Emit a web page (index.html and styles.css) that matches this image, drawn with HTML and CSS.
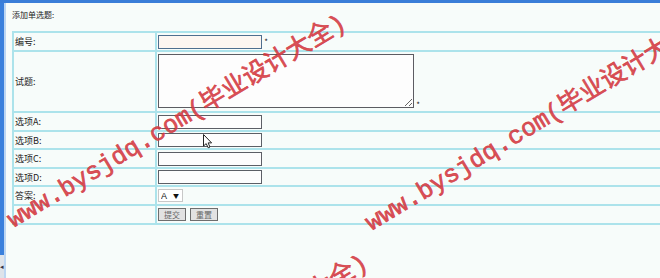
FILE: index.html
```html
<!DOCTYPE html>
<html lang="zh-CN">
<head>
<meta charset="utf-8">
<title>添加单选题</title>
<link rel="stylesheet" href="styles.css">
</head>
<body>
<div class="topbar"></div>
<div class="frame">
  <div class="leftbar">
    <div class="leftbar-blue"></div>
    <div class="leftbar-scroll"><span class="scroll-arrow">◂</span></div>
  </div>
  <div class="main">
    <div class="title">添加单选题:</div>
    <div class="form">
      <div class="cell label">编号:</div>
      <div class="cell value"><span class="field"><input class="txt focus" type="text"> <span class="star">*</span></span></div>

      <div class="cell label">试题:</div>
      <div class="cell value"><span class="field"><textarea class="area"></textarea> <span class="star">*</span></span></div>

      <div class="cell label">选项A:</div>
      <div class="cell value"><input class="txt" type="text"></div>

      <div class="cell label">选项B:</div>
      <div class="cell value"><input class="txt" type="text"></div>

      <div class="cell label">选项C:</div>
      <div class="cell value"><input class="txt" type="text"></div>

      <div class="cell label">选项D:</div>
      <div class="cell value"><input class="txt" type="text"></div>

      <div class="cell label">答案:</div>
      <div class="cell value">
        <span class="selectbox"><select class="sel"><option>A</option><option>B</option><option>C</option><option>D</option></select><span class="sel-arrow">▼</span></span>
      </div>

      <div class="cell label"></div>
      <div class="cell value buttons">
        <button class="btn" type="button">提交</button>
        <button class="btn" type="button">重置</button>
      </div>
    </div>
  </div>
</div>

<div class="watermarks">
  <span class="mark mark1">www.bysjdq.com(毕业设计大全)</span>
  <span class="mark mark2">www.bysjdq.com(毕业设计大全)</span>
  <span class="mark mark3">www.bysjdq.com(毕业设计大全)</span>
</div>

<svg class="cursor" width="10" height="15" viewBox="0 0 10 15">
  <path d="M0.5,0.5 L0.5,12 L3.2,9.6 L5.2,13.8 L7,13 L5.1,8.9 L8.6,8.9 Z" fill="#fff" stroke="#222" stroke-width="1" stroke-linejoin="round"/>
</svg>
</body>
</html>
```

FILE: styles.css
```css
html, body {
  margin: 0;
  padding: 0;
}
body {
  width: 660px;
  height: 278px;
  overflow: hidden;
  background: #f7fcfa;
  font-family: "Noto Sans CJK SC", "Liberation Sans", sans-serif;
  color: #222;
  position: relative;
}
.topbar {
  height: 3px;
  background: #3a7ed8;
}
.frame {
  display: flex;
  height: 275px;
}
.leftbar {
  width: 5px;
  border-right: 2px solid #bcd6f2;
  display: flex;
  flex-direction: column;
}
.leftbar-blue {
  flex: 0 0 252px;
  background: #3a80dc;
}
.leftbar-scroll {
  flex: 1;
  background: #dde3ea;
  display: flex;
  align-items: center;
  justify-content: center;
}
.scroll-arrow {
  font-size: 7px;
  color: #334;
  line-height: 1;
}
.main {
  flex: 1;
  padding-left: 6px;
}
.title {
  height: 28px;
  line-height: 23px;
  font-size: 8px;
}
.form {
  width: 720px;
  display: grid;
  grid-template-columns: 143px 1fr;
  grid-template-rows: 19px 61px 19px 18px 19px 18px 19px 19px;
  border-bottom: 2px solid #ace3eb;
}
.cell {
  box-sizing: border-box;
  border-top: 2px solid #ace3eb;
  border-left: 2px solid #ace3eb;
  display: flex;
  align-items: center;
}
.label {
  font-size: 9px;
  padding-left: 1px;
}
.value {
  padding-left: 1px;
}
.field {
  font-size: 10px;
  line-height: 1;
}
.txt {
  box-sizing: border-box;
  width: 104px;
  height: 14px;
  margin: 0;
  padding: 0 2px;
  border: 1px solid #5c5f66;
  background: #fdfdfd;
  font-size: 9px;
}
.txt.focus {
  border-color: #4f6f8f;
  background: #fdf6f1;
}
.area {
  box-sizing: border-box;
  width: 256px;
  height: 54px;
  margin: 0;
  padding: 1px;
  border: 1px solid #5c5c62;
  background: #fdfdfd;
  vertical-align: baseline;
  font-size: 9px;
}
.star {
  font-size: 8px;
  color: #222;
}
.selectbox {
  display: inline-flex;
  align-items: center;
  height: 13px;
  width: 25px;
  box-sizing: border-box;
  border: 1px solid #c8c8c8;
  background: #ffffff;
}
.sel {
  appearance: none;
  -webkit-appearance: none;
  border: 0;
  background: transparent;
  margin: 0;
  padding: 0 0 0 2px;
  width: 14px;
  font-family: "Liberation Sans", sans-serif;
  font-size: 9px;
  color: #111;
  outline: none;
}
.sel-arrow {
  font-size: 6px;
  color: #111;
  line-height: 1;
}
.buttons {
  gap: 4px;
}
.btn {
  box-sizing: border-box;
  width: 28px;
  height: 13px;
  margin: 0;
  padding: 0;
  border: 1px solid #6e6e6e;
  background: #e2e2e2;
  color: #666;
  font-family: "Noto Sans CJK SC", sans-serif;
  font-size: 8px;
  line-height: 1;
}
.watermarks {
  position: absolute;
  left: 0;
  top: 0;
  width: 660px;
  height: 278px;
  overflow: hidden;
  pointer-events: none;
}
.mark {
  position: absolute;
  white-space: nowrap;
  font-family: "Liberation Mono", "Noto Sans CJK SC", monospace;
  font-weight: normal;
  font-size: 25px;
  line-height: 25px;
  color: rgba(212, 58, 66, 0.9);
  -webkit-text-stroke: 0.7px rgba(212, 58, 66, 0.9);
  transform-origin: 0 50%;
  transform: rotate(-31deg);
}
.mark1 { left: 10px; top: 210px; }
.mark2 { left: 368px; top: 213px; }
.mark3 { left: 32px; top: 450px; }
.cursor {
  position: absolute;
  left: 203px;
  top: 134px;
}
```
